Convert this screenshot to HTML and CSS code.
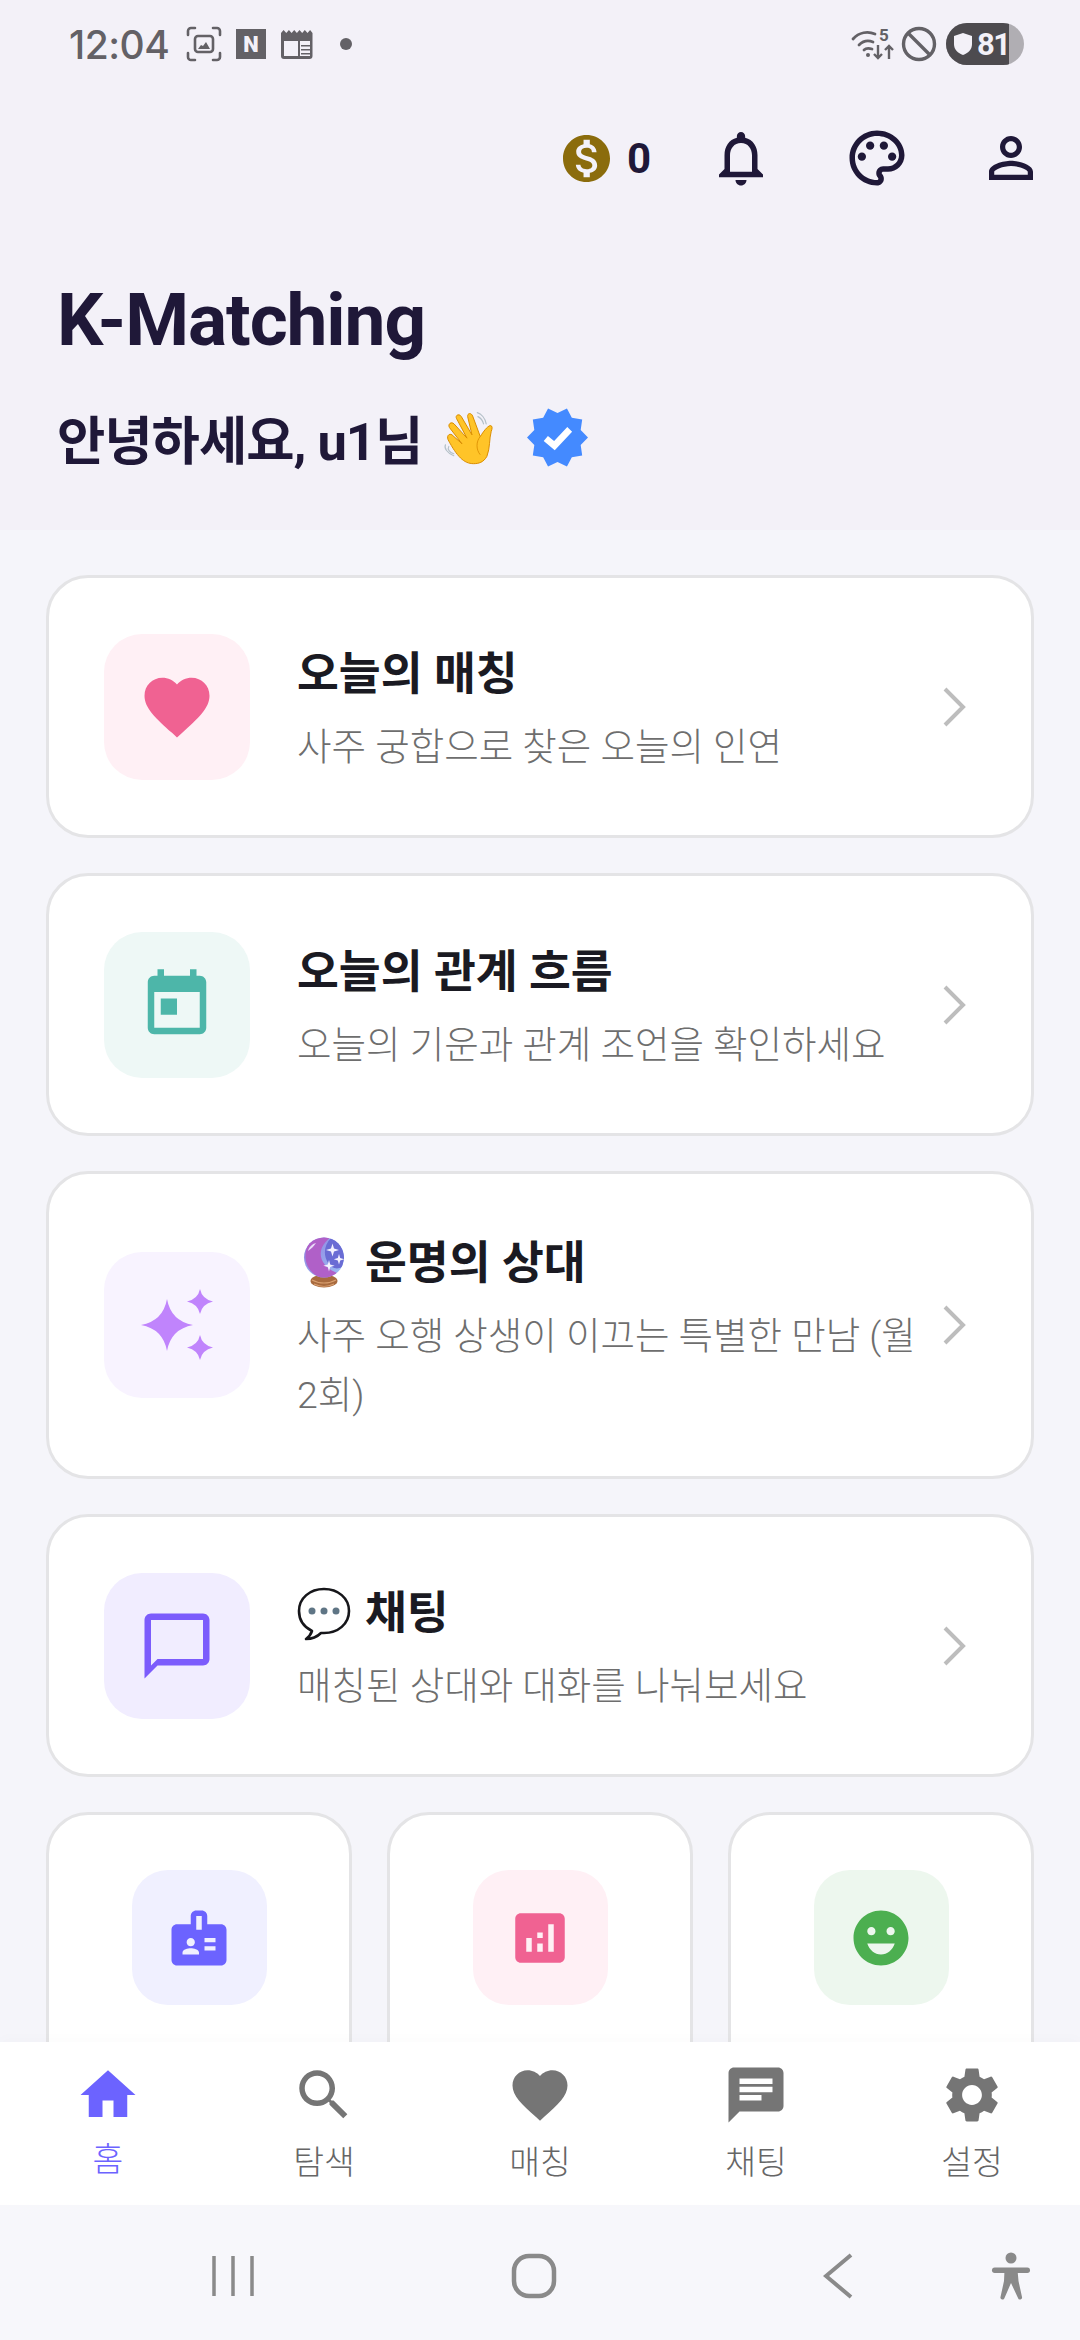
FILE: index.html
```html
<!DOCTYPE html>
<html lang="ko">
<head>
<meta charset="utf-8">
<title>K-Matching</title>
<link rel="stylesheet" href="styles.css">
</head>
<body>
<div class="app">
  <header class="header">
    <div class="status">
      <span class="time">12:04</span>
      <svg class="st-shot" viewBox="0 0 36 36"><g fill="none" stroke="#636166" stroke-width="2.6" stroke-linecap="round"><path d="M2 9V5a3 3 0 0 1 3-3h4M27 2h4a3 3 0 0 1 3 3v4M34 27v4a3 3 0 0 1-3 3h-4M9 34H5a3 3 0 0 1-3-3v-4"/><rect x="9" y="10" width="18" height="16" rx="3"/></g><path d="M12 23l3-4 2 1 3-4 4 7z" fill="#636166"/></svg>
      <span class="st-n">N</span>
      <svg class="st-news" viewBox="0 0 32 30"><path d="M0 4l2.6-3 2.7 3 2.6-3 2.7 3 2.6-3 2.7 3 2.6-3 2.7 3 2.6-3 2.7 3 2.6-3 2.4 3v23a3 3 0 0 1-3 3H3a3 3 0 0 1-3-3z" fill="#636166"/><path d="M3 11h26v16H3z" fill="#f3f1f8"/><path d="M3 10h26v2H3zM17 12h2v15h-2zM20 16h9v1.500h-9zM20 20h9v1.500h-9zM20 24h9v1.500h-9z" fill="#636166"/></svg>
      <span class="st-dot"></span>
      <div class="st-wifi">
        <svg class="st-wifi-ico" viewBox="0 0 44 32"><g fill="none" stroke="#636166" stroke-width="2.800" stroke-linecap="round"><path d="M2 11C8 4 17 3 24 6"/><path d="M8 17c4-4 9-5 14-3"/><path d="M13 22c2-2 5-2 8-1"/></g><circle cx="17" cy="27" r="2" fill="#636166"/><g fill="none" stroke="#636166" stroke-width="2.400"><path d="M27 17v13M23 26l4 4 4-4M38 31V18M34 22l4-4 4 4"/></g></svg>
        <span class="st-five">5</span>
      </div>
      <svg class="st-block" viewBox="0 0 36 36"><circle cx="18" cy="18" r="15.500" fill="none" stroke="#636166" stroke-width="3.400"/><path d="M7 7l22 22" stroke="#636166" stroke-width="3.400"/></svg>
      <div class="batt">
        <div class="batt-fill">
          <svg class="batt-shield" viewBox="0 0 20 24"><path d="M10 1l9 3v8c0 6-4 9-9 11-5-2-9-5-9-11V4z" fill="#f3f1f8"/></svg>
          <span>81</span>
        </div>
      </div>
    </div>
    <div class="toolbar">
      <div class="coin">
        <svg class="ico-coin" viewBox="2 2 20 20"><path fill="#8b6c0c" d="M12 2C6.48 2 2 6.48 2 12s4.48 10 10 10 10-4.480 10-10S17.520 2 12 2zm1.410 16.090V20h-2.670v-1.930c-1.710-.36-3.160-1.460-3.270-3.400h1.960c.1 1.050.82 1.870 2.650 1.870 1.960 0 2.400-.98 2.400-1.590 0-.83-.44-1.610-2.670-2.140-2.480-.6-4.180-1.620-4.180-3.670 0-1.720 1.390-2.840 3.110-3.210V4h2.670v1.950c1.860.45 2.790 1.860 2.870 3.390H14.300c-.05-1.110-.64-1.870-2.220-1.870-1.500 0-2.400.68-2.400 1.640 0 .84.65 1.390 2.670 1.910s4.180 1.390 4.180 3.910c-.01 1.830-1.380 2.830-3.120 3.160z"/></svg>
        <span class="coin-n">0</span>
      </div>
      <button class="tbtn"><svg viewBox="0 0 24 24"><path d="M12 22c1.100 0 2-.9 2-2h-4c0 1.100.9 2 2 2zm6-6v-5c0-3.070-1.630-5.640-4.500-6.320V4c0-.83-.67-1.500-1.500-1.500s-1.500.67-1.500 1.500v.68C7.640 5.360 6 7.920 6 11v5l-2 2v1h16v-1l-2-2zm-2 1H8v-6c0-2.480 1.510-4.500 4-4.500s4 2.020 4 4.500v6z"/></svg></button>
      <button class="tbtn"><svg viewBox="0 0 24 24"><path d="M12 22C6.490 22 2 17.510 2 12S6.490 2 12 2s10 4.040 10 9c0 3.310-2.690 6-6 6h-1.770c-.28 0-.5.22-.5.5 0 .12.05.23.13.33.41.47.64 1.060.64 1.670 0 1.380-1.120 2.500-2.500 2.500zm0-18c-4.410 0-8 3.590-8 8s3.590 8 8 8c.28 0 .5-.22.5-.5 0-.16-.08-.28-.14-.35-.41-.46-.63-1.050-.63-1.650 0-1.380 1.120-2.500 2.500-2.500H16c2.210 0 4-1.790 4-4 0-3.860-3.590-7-8-7z"/><circle cx="6.500" cy="11.500" r="1.500"/><circle cx="9.500" cy="7.500" r="1.500"/><circle cx="14.500" cy="7.500" r="1.500"/><circle cx="17.500" cy="11.500" r="1.500"/></svg></button>
      <button class="tbtn"><svg viewBox="0 0 24 24"><path d="M12 5.900c1.160 0 2.100.94 2.100 2.100s-.94 2.100-2.100 2.100S9.900 9.160 9.900 8s.94-2.100 2.100-2.100m0 9c2.970 0 6.100 1.460 6.100 2.100v1.100H5.900V17c0-.64 3.130-2.100 6.100-2.100M12 4C9.790 4 8 5.790 8 8s1.790 4 4 4 4-1.790 4-4-1.790-4-4-4zm0 9c-2.670 0-8 1.340-8 4v3h16v-3c0-2.660-5.330-4-8-4z"/></svg></button>
    </div>
    <h1 class="brand">K-Matching</h1>
    <div class="greet">
      <span>안녕하세요, u1님</span>
      <svg class="wave" viewBox="70 50 156 166"><g stroke="#b4c0c8" stroke-width="3.500" fill="none" stroke-linecap="round"><path d="M176 58c12 4 24 17 27 34M178 70c8 4 14 10 17 22M80 155c-5 10 5 25 25 33M90 160c-5 8 2 18 15 22"/></g><path d="M165 212C135 212 115 190 88 140C82 125 95 118 103 128L130 152L92 103C86 92 98 84 106 92L145 135L113 75C109 65 122 60 128 70L160 125L147 70C146 58 158 58 162 68L185 130C195 115 205 100 215 97C222 97 222 105 218 115C212 135 215 165 205 190C195 208 180 212 165 212Z" fill="#ffc428" stroke="#d98c00" stroke-width="3" stroke-linejoin="round"/><path d="M185 130C172 145 172 170 185 185" fill="none" stroke="#d98c00" stroke-width="2.500"/></svg>
      <svg class="verified" viewBox="0 0 60 60"><path fill="#448aff" d="M60 30L52.800 37.400 54.300 47.600 44.100 49.400 39.300 58.500 30 54 20.700 58.500 15.900 49.400 5.700 47.600 7.200 37.400 0 30 7.200 22.600 5.700 12.400 15.900 10.600 20.700 1.500 30 6 39.300 1.500 44.100 10.600 54.300 12.400 52.800 22.600z"/><path d="M18.500 31l8.500 7 15-16" fill="none" stroke="#fff" stroke-width="6.500"/></svg>
    </div>
  </header>

  <main class="main">
    <a class="card">
      <div class="ibox pink"><svg viewBox="0 0 24 24"><path d="M12 21.350l-1.450-1.320C5.400 15.360 2 12.280 2 8.500 2 5.420 4.420 3 7.500 3c1.740 0 3.410.81 4.500 2.090C13.090 3.810 14.760 3 16.500 3 19.580 3 22 5.420 22 8.500c0 3.780-3.400 6.860-8.550 11.540L12 21.350z"/></svg></div>
      <div class="ctext">
        <div class="ctitle">오늘의 매칭</div>
        <div class="csub">사주 궁합으로 찾은 오늘의 인연</div>
      </div>
      <svg class="chev" viewBox="0 0 24 40"><path d="M3 2l18 18L3 38"/></svg>
    </a>
    <a class="card">
      <div class="ibox teal"><svg viewBox="0 0 24 24"><path d="M19 3h-1V1h-2v2H8V1H6v2H5c-1.110 0-1.990.9-1.990 2L3 19c0 1.100.89 2 2 2h14c1.100 0 2-.9 2-2V5c0-1.100-.9-2-2-2zm0 16H5V8h14v11zM7 10h5v5H7z"/></svg></div>
      <div class="ctext">
        <div class="ctitle">오늘의 관계 흐름</div>
        <div class="csub">오늘의 기운과 관계 조언을 확인하세요</div>
      </div>
      <svg class="chev" viewBox="0 0 24 40"><path d="M3 2l18 18L3 38"/></svg>
    </a>
    <a class="card">
      <div class="ibox violet"><svg viewBox="0 0 78 78"><path d="M29 13Q33 35 55 39 33 43 29 65 25 43 3 39 25 35 29 13zM62 3Q64 13 75 15.500 64 18 62 28 60 18 49 15.500 60 13 62 3zM62 49Q64 59 75 61.500 64 64 62 74 60 64 49 61.500 60 59 62 49z"/></svg></div>
      <div class="ctext">
        <div class="ctitle ctitle-e">
          <svg class="emo" viewBox="0 0 54 54"><defs><linearGradient id="ball" x1="0" y1="0" x2="1" y2="1"><stop offset="0" stop-color="#8f80e0"/><stop offset="1" stop-color="#9cc2f4"/></linearGradient><clipPath id="ballclip"><circle cx="27" cy="20.500" r="20"/></clipPath></defs><ellipse cx="27" cy="44" rx="13.500" ry="6.500" fill="#a86a3e"/><path d="M15 43c7 4 17 4 24 0M17 47c6 3 14 3 20 0" stroke="#d9a070" stroke-width="1.200" fill="none"/><circle cx="27" cy="20.500" r="20" fill="url(#ball)"/><g clip-path="url(#ballclip)"><path d="M12 6C4 20 10 36 24 41C30 42 36 40 40 36C30 32 22 24 24 14C25 8 30 3 34 0C26-2 16 0 12 6Z" fill="#b060c8"/><path d="M34 1C27 8 26 18 31 26C34 31 40 33 45 30C50 20 46 6 34 1Z" fill="#6a6cd4"/></g><path d="M11 14c1-4 4-7 8-8-2 3-5 6-8 8z" fill="#e9ddf8"/><path d="M35.500 6.500l1.500 5 5 1.500-5 1.500-1.500 5-1.500-5-5-1.500 5-1.500zM42 17l1.200 4 4 1.200-4 1.200-1.200 4-1.200-4-4-1.200 4-1.200zM32 23l1.200 4.500 4.500 1.200-4.500 1.200-1.200 4.500-1.200-4.500-4.500-1.200 4.500-1.200z" fill="#f4f2ff"/></svg>
          <span>운명의 상대</span>
        </div>
        <div class="csub">사주 오행 상생이 이끄는 특별한 만남 (월 2회)</div>
      </div>
      <svg class="chev" viewBox="0 0 24 40"><path d="M3 2l18 18L3 38"/></svg>
    </a>
    <a class="card">
      <div class="ibox indigo"><svg viewBox="0 0 24 24"><path d="M20 2H4c-1.100 0-2 .9-2 2v18l4-4h14c1.100 0 2-.9 2-2V4c0-1.100-.9-2-2-2zm0 14H6l-2 2V4h16v12z"/></svg></div>
      <div class="ctext">
        <div class="ctitle ctitle-e">
          <svg class="emo" viewBox="0 0 54 54"><path d="M27 2C13 2 2 11 2 24c0 9 5 16 13 20-1 3-3 6-6 8 6 0 11-2 15-6 1 0 2 0 3 0 14 0 25-9 25-22S41 2 27 2z" fill="#fff" stroke="#16161a" stroke-width="2.600" stroke-linejoin="round"/><circle cx="15" cy="24" r="3.500" fill="#5f7585"/><circle cx="27" cy="24" r="3.500" fill="#5f7585"/><circle cx="39" cy="24" r="3.500" fill="#5f7585"/></svg>
          <span>채팅</span>
        </div>
        <div class="csub">매칭된 상대와 대화를 나눠보세요</div>
      </div>
      <svg class="chev" viewBox="0 0 24 40"><path d="M3 2l18 18L3 38"/></svg>
    </a>
    <div class="grid">
      <div class="tile"><div class="tbox t-blue"><svg viewBox="0 0 24 24"><path d="M20 7h-5V4c0-1.100-.9-2-2-2h-2c-1.100 0-2 .9-2 2v3H4c-1.100 0-2 .9-2 2v11c0 1.100.9 2 2 2h16c1.100 0 2-.9 2-2V9c0-1.100-.9-2-2-2zM9 12c.83 0 1.500.67 1.500 1.500S9.830 15 9 15s-1.500-.67-1.500-1.500S8.170 12 9 12zm3 6H6v-.75c0-1 2-1.500 3-1.500s3 .5 3 1.500V18zm1-9h-2V4h2v5zm5 7.500h-4V15h4v1.500zm0-3h-4V12h4v1.500z"/></svg></div></div>
      <div class="tile"><div class="tbox t-pink"><svg viewBox="0 0 24 24"><path d="M19 3H5c-1.100 0-2 .9-2 2v14c0 1.100.9 2 2 2h14c1.100 0 2-.9 2-2V5c0-1.100-.9-2-2-2zM9 17H7v-5h2v5zm4 0h-2v-3h2v3zm0-5h-2v-2h2v2zm4 5h-2V7h2v10z"/></svg></div></div>
      <div class="tile"><div class="tbox t-green"><svg viewBox="0 0 24 24"><path d="M11.990 2C6.470 2 2 6.480 2 12s4.470 10 9.990 10C17.520 22 22 17.520 22 12S17.520 2 11.990 2zM8.500 8C9.330 8 10 8.670 10 9.500S9.330 11 8.500 11 7 10.330 7 9.500 7.670 8 8.500 8zm7 0c.83 0 1.500.67 1.500 1.500s-.67 1.500-1.500 1.500-1.500-.67-1.500-1.500.67-1.500 1.500-1.500zM12 18c-2.280 0-4.220-1.660-5-4h10c-.78 2.340-2.720 4-5 4z"/></svg></div></div>
    </div>
  </main>

  <nav class="nav">
    <div class="nitem active"><svg viewBox="0 0 24 24"><path d="M10 20v-6h4v6h5v-8h3L12 3 2 12h3v8z"/></svg><span>홈</span></div>
    <div class="nitem"><svg viewBox="0 0 24 24"><path d="M15.500 14h-.79l-.28-.27C15.410 12.590 16 11.110 16 9.500 16 5.910 13.090 3 9.500 3S3 5.910 3 9.500 5.910 16 9.500 16c1.610 0 3.090-.59 4.230-1.570l.27.28v.79l5 4.990L20.490 19l-4.990-5zm-6 0C7.010 14 5 11.990 5 9.500S7.010 5 9.500 5 14 7.010 14 9.500 11.990 14 9.500 14z"/></svg><span>탐색</span></div>
    <div class="nitem"><svg viewBox="0 0 24 24"><path d="M12 21.350l-1.450-1.320C5.400 15.360 2 12.280 2 8.500 2 5.420 4.420 3 7.500 3c1.740 0 3.410.81 4.500 2.090C13.090 3.810 14.760 3 16.500 3 19.580 3 22 5.420 22 8.500c0 3.780-3.400 6.860-8.550 11.540L12 21.350z"/></svg><span>매칭</span></div>
    <div class="nitem"><svg viewBox="0 0 24 24"><path d="M20 2H4c-1.100 0-1.990.9-1.990 2L2 22l4-4h14c1.100 0 2-.9 2-2V4c0-1.100-.9-2-2-2zM6 9h12v2H6V9zm8 5H6v-2h8v2zm4-6H6V6h12v2z"/></svg><span>채팅</span></div>
    <div class="nitem"><svg viewBox="0 0 24 24"><path d="M19.140 12.940c.04-.3.06-.61.06-.94 0-.32-.02-.64-.07-.94l2.030-1.580c.18-.14.23-.41.12-.61l-1.920-3.320c-.12-.22-.37-.29-.59-.22l-2.390.96c-.5-.38-1.030-.7-1.620-.94l-.36-2.540c-.04-.24-.24-.41-.48-.41h-3.840c-.24 0-.43.17-.47.41l-.36 2.540c-.59.24-1.130.57-1.620.94l-2.390-.96c-.22-.08-.47 0-.59.22L2.740 8.870c-.12.21-.08.47.12.61l2.030 1.580c-.05.3-.09.63-.09.94s.02.64.07.94l-2.030 1.580c-.18.14-.23.41-.12.61l1.920 3.320c.12.22.37.29.59.22l2.390-.96c.5.38 1.030.7 1.620.94l.36 2.540c.05.24.24.41.48.41h3.840c.24 0 .44-.17.47-.41l.36-2.540c.59-.24 1.130-.56 1.620-.94l2.390.96c.22.08.47 0 .59-.22l1.920-3.320c.12-.22.07-.47-.12-.61l-2.010-1.580zM12 15.600c-1.980 0-3.600-1.620-3.600-3.600s1.620-3.600 3.600-3.600 3.600 1.620 3.600 3.600-1.620 3.600-3.600 3.600z"/></svg><span>설정</span></div>
  </nav>

  <div class="sysnav">
    <svg class="sn-recent" viewBox="0 0 44 44"><path d="M3 2v40M22 2v40M41 2v40"/></svg>
    <svg class="sn-home" viewBox="0 0 46 46"><rect x="3" y="3" width="40" height="40" rx="15"/></svg>
    <svg class="sn-back" viewBox="0 0 30 46"><path d="M28 2L3 23l25 21"/></svg>
    <svg class="sn-acc" viewBox="0 0 40 48"><circle cx="20" cy="6" r="5.500" class="fillg"/><rect x="1" y="15.500" width="38" height="5.500" rx="2.700" class="fillg"/><path d="M13.500 18h13l1 11 3.500 16a2 2 0 0 1-4 1L20 31l-6.500 15a2 2 0 0 1-4-1L13 29z" class="fillg"/></svg>
  </div>
</div>
</body>
</html>
```
FILE: styles.css
```css
* { box-sizing: border-box; margin: 0; padding: 0; }
html, body { width: 1080px; height: 2340px; overflow: hidden; }
body { font-family: Roboto, "Noto Sans CJK KR", sans-serif; background: #f5f5fa; }
.app { width: 1080px; height: 2340px; display: flex; flex-direction: column; overflow: hidden; }

.header { height: 530px; flex: none; background: #f3f1f8; color: #1f1838; }
.status { height: 88px; display: flex; align-items: center; padding: 0 56px 0 69px; }
.time { font-family: Inter, Roboto, sans-serif; font-size: 39px; font-weight: 500; color: #636166; width: 100px; white-space: nowrap; letter-spacing: -.5px; }
.st-shot { width: 36px; height: 36px; margin-left: 17px; }
.st-n { width: 30px; height: 30px; margin-left: 14px; background: #636166; color: #f3f1f8; font-size: 22px; font-weight: 900; display: flex; align-items: center; justify-content: center; }
.st-news { width: 32px; height: 30px; margin-left: 15px; }
.st-dot { width: 12px; height: 12px; border-radius: 50%; background: #636166; margin-left: 27px; }
.st-wifi { width: 44px; height: 32px; margin-left: auto; position: relative; }
.st-wifi-ico { width: 44px; height: 32px; display: block; }
.st-five { position: absolute; left: 28px; top: -2px; font-size: 17px; line-height: 18px; font-weight: 700; color: #636166; }
.st-block { width: 36px; height: 36px; margin-left: 6px; }
.batt { width: 78px; height: 42px; margin-left: 9px; border-radius: 21px; overflow: hidden; background: #b0aeb3; }
.batt-fill { width: 63px; height: 42px; background: #4d4b4f; color: #f3f1f8; display: flex; align-items: center; padding-left: 7px; gap: 4px; font-size: 31px; font-weight: 700; letter-spacing: -1.500px; white-space: nowrap; }
.batt-shield { width: 20px; height: 24px; flex: none; }

.toolbar { height: 140px; display: flex; align-items: center; justify-content: flex-end; padding-right: 36px; }
.coin { display: flex; align-items: center; gap: 17px; margin-right: 57px; }
.ico-coin { width: 47px; height: 47px; }
.coin-n { font-size: 42px; font-weight: 700; }
.tbtn { width: 66px; height: 66px; background: none; border: 0; display: flex; justify-content: center; margin-left: 70px; }
.tbtn:nth-of-type(1) { margin-left: 0; }
.tbtn:last-child { margin-left: 68px; }
.tbtn svg { width: 66px; height: 66px; fill: #1f1838; }

.brand { margin: 50px 0 0 57px; font-size: 73px; line-height: 84px; font-weight: 700; letter-spacing: -1.100px; }
.greet { margin: 40px 0 0 57px; height: 70px; display: flex; align-items: center; font-size: 52.500px; font-weight: 700; white-space: nowrap; letter-spacing: -1px; }
.wave { width: 52px; height: 55px; margin-left: 20px; }
.verified { width: 61px; height: 61px; margin-left: 33px; }

.main { flex: 1; min-height: 0; overflow: hidden; padding: 45px 46px 0; display: flex; flex-direction: column; gap: 35px; }
.card { flex: none; min-height: 263px; background: #fff; border: 3px solid #e4e4e6; border-radius: 42px; padding: 51px 55px; display: flex; align-items: center; }
.ibox { width: 146px; height: 146px; flex: none; border-radius: 38px; display: flex; align-items: center; justify-content: center; }
.ibox svg { width: 78px; height: 78px; }
.pink { background: #fff0f5; fill: #f06292; }
.teal { background: #eef8f6; fill: #4db6a9; }
.violet { background: #f8f3ff; fill: #c084fc; }
.indigo { background: #f1edff; fill: #7c5cfc; }
.ctext { flex: 1; min-width: 0; margin-left: 47px; padding-top: 6px; }
.ctitle { font-size: 45.500px; line-height: 66px; font-weight: 700; color: #1a1a22; white-space: nowrap; margin-bottom: 10px; }
.ctitle-e { display: flex; align-items: center; gap: 14px; }
.emo { width: 54px; height: 54px; flex: none; }
.csub { font-size: 37.500px; line-height: 59px; font-weight: 300; color: #6e6e6e; }
.chev { width: 24px; height: 40px; flex: none; margin-left: 16px; margin-right: 10px; fill: none; stroke: #bdbdbd; stroke-width: 4; }

.grid { flex: none; display: grid; grid-template-columns: repeat(3, 1fr); gap: 35px; }
.tile { height: 320px; background: #fff; border: 3px solid #e4e4e6; border-radius: 42px; padding: 55px 0 0; display: flex; justify-content: center; align-items: flex-start; }
.tbox { width: 135px; height: 135px; border-radius: 36px; display: flex; align-items: center; justify-content: center; }
.tbox svg { width: 66px; height: 66px; }
.t-blue { background: #f0f0ff; fill: #6c63ff; }
.t-pink { background: #fff0f5; fill: #f06292; }
.t-green { background: #edf7ee; fill: #4caf50; }

.nav { height: 163px; flex: none; background: #fff; display: flex; box-shadow: 0 -4px 12px rgba(0,0,0,.015); position: relative; }
.nitem { width: 216px; display: flex; flex-direction: column; align-items: center; padding-top: 20px; fill: #757575; color: #666; font-size: 33.500px; line-height: 44px; font-weight: 300; }
.nitem svg { width: 66px; height: 66px; margin-bottom: 13px; }
.nitem.active { fill: #6c63ff; color: #6c63ff; }
.nitem.active span { margin-top: -3px; }

.sysnav { height: 135px; flex: none; background: #f7f7fb; display: flex; align-items: center; position: relative; padding-left: 211px; padding-top: 6px; fill: none; stroke: #8a8a8a; stroke-width: 3.500; }
.sn-recent { width: 44px; height: 44px; }
.sn-home { width: 46px; height: 46px; margin-left: 256px; stroke-width: 4.500; }
.sn-back { width: 30px; height: 46px; margin-left: 266px; stroke-width: 4; }
.sn-acc { width: 40px; height: 48px; margin-left: 138px; }
.fillg { fill: #8a8a8a; stroke: none; }
```
